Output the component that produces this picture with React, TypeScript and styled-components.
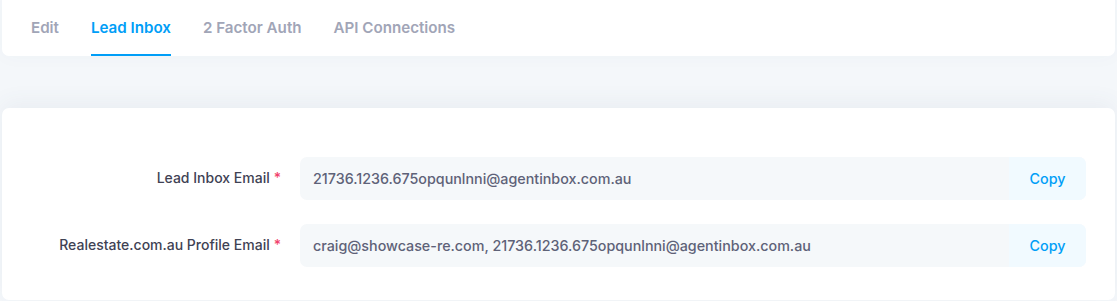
import React from "react";
import styled, { createGlobalStyle } from "styled-components";

const Global = createGlobalStyle`
  html, body { margin: 0; padding: 0; background: #f4f7fa; }
  body { font-family: Inter, "Noto Sans", sans-serif; -webkit-font-smoothing: antialiased; }
  * { box-sizing: border-box; }
`;

const Page = styled.div`
  display: flex;
  flex-direction: column;
  gap: 52px;
  padding: 0 2px 1px 2px;
  width: 1117px;
  height: 301px;
  background: #f4f7fa;
`;

const TabCard = styled.div`
  background: #fff;
  border-radius: 0 0 7px 7px;
  height: 56px;
  display: flex;
  align-items: stretch;
  padding: 0 29px;
  gap: 32px;
  box-shadow: 0 0 20px rgba(76, 87, 125, 0.03);
`;

const Tab = styled.div<{ $active?: boolean }>`
  display: flex;
  align-items: center;
  padding-top: 1px;
  font-size: 15.15px;
  font-weight: 600;
  color: ${(p) => (p.$active ? "#009ef7" : "#a1a5b7")};
  border-bottom: 2px solid ${(p) => (p.$active ? "#009ef7" : "transparent")};
`;

const FormCard = styled.div`
  flex: 1;
  background: #fff;
  border-radius: 7px;
  padding: 49px 29px 32px 0;
  display: flex;
  flex-direction: column;
  gap: 24px;
  box-shadow: 0 -6px 22px rgba(76, 87, 125, 0.06);
`;

const Row = styled.div`
  display: grid;
  grid-template-columns: 298px 1fr;
  align-items: center;
`;

const Label = styled.div`
  text-align: right;
  padding-right: 19px;
  padding-bottom: 2px;
  font-size: 14px;
  font-weight: 500;
  color: #3f4254;
`;

const Req = styled.span`
  color: #f1416c;
  margin-left: 4px;
`;

const Field = styled.div`
  display: flex;
  height: 43px;
  border-radius: 7px;
  overflow: hidden;
  background: #f5f8fa;
`;

const Value = styled.div`
  flex: 1;
  display: flex;
  align-items: center;
  padding-left: 13px;
  font-size: 14.3px;
  font-weight: 500;
  color: #5e6278;
`;

const Copy = styled.button`
  width: 77px;
  border: 0;
  background: #f1faff;
  color: #009ef7;
  font-family: Inter, "Noto Sans", sans-serif;
  font-size: 14.3px;
  font-weight: 500;
  padding: 0;
  cursor: pointer;
`;

const rows = [
  { label: "Lead Inbox Email", value: "21736.1236.675opqunlnni@agentinbox.com.au" },
  {
    label: "Realestate.com.au Profile Email",
    value: "craig@showcase-re.com, 21736.1236.675opqunlnni@agentinbox.com.au",
  },
];

export default function App() {
  return (
    <>
      <Global />
      <Page>
        <TabCard>
          <Tab>Edit</Tab>
          <Tab $active>Lead Inbox</Tab>
          <Tab>2 Factor Auth</Tab>
          <Tab>API Connections</Tab>
        </TabCard>
        <FormCard>
          {rows.map((r) => (
            <Row key={r.label}>
              <Label>
                {r.label}
                <Req>*</Req>
              </Label>
              <Field>
                <Value>{r.value}</Value>
                <Copy>Copy</Copy>
              </Field>
            </Row>
          ))}
        </FormCard>
      </Page>
    </>
  );
}
